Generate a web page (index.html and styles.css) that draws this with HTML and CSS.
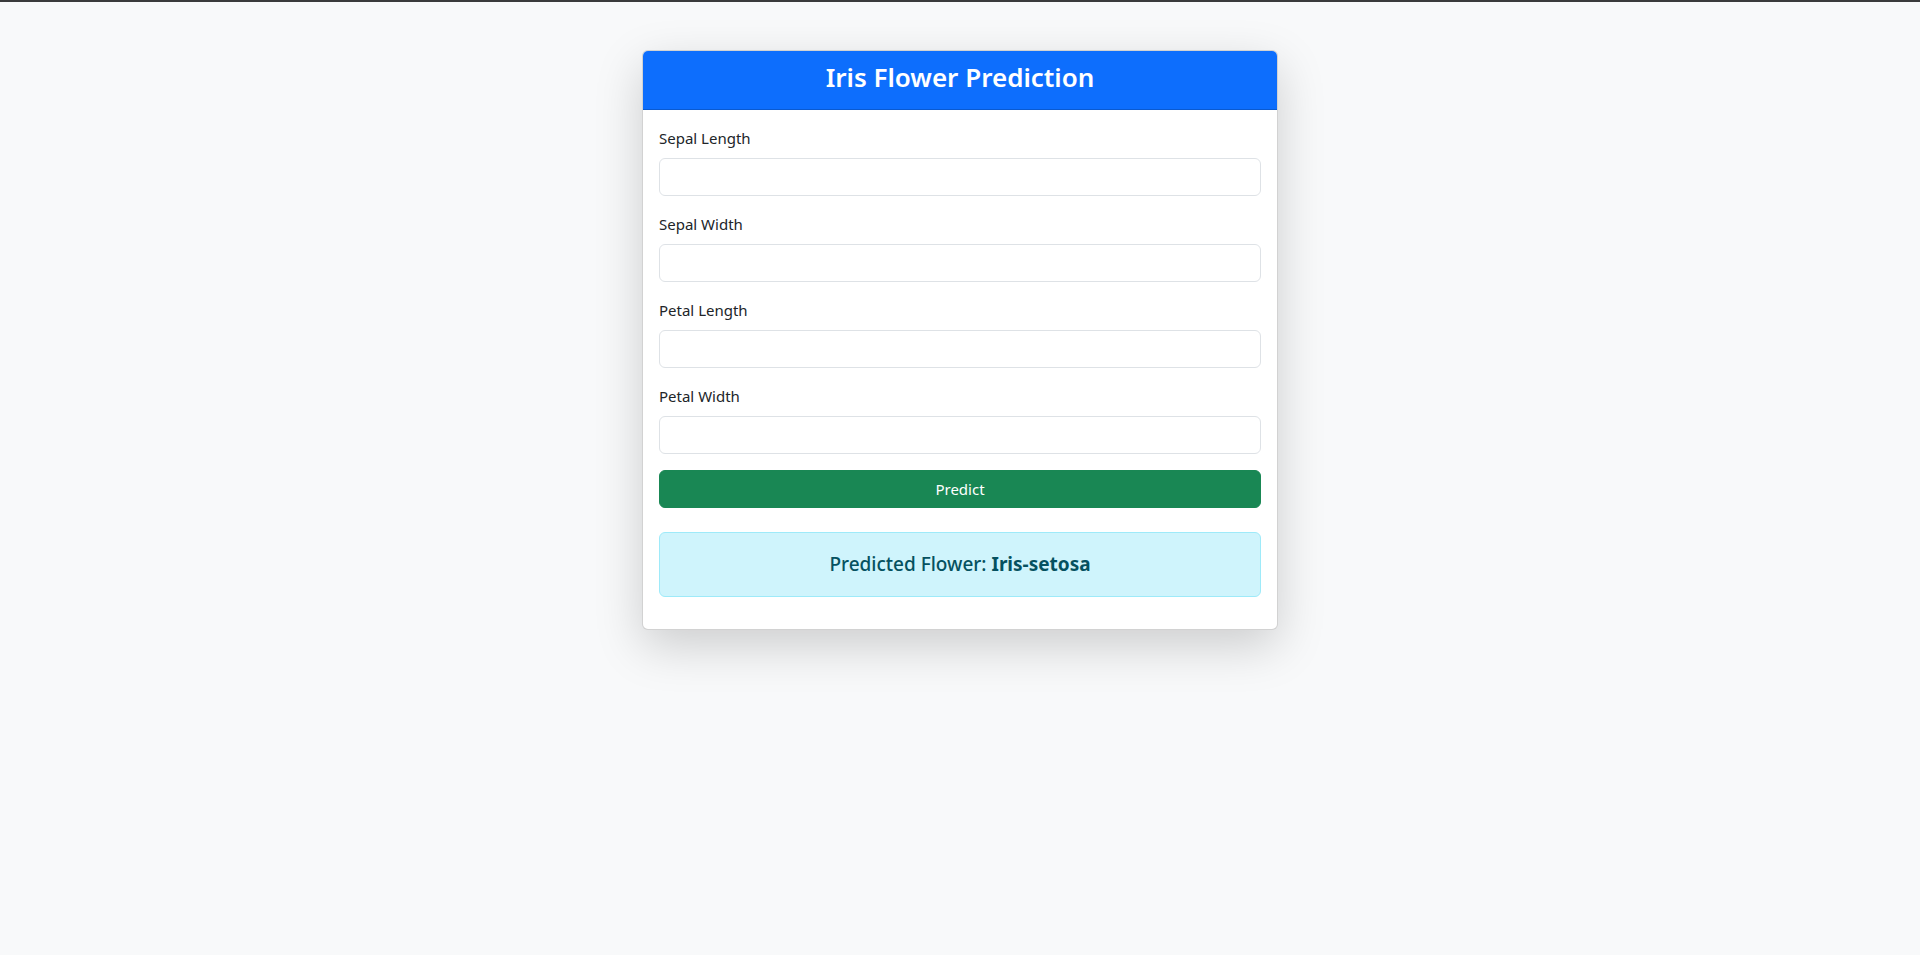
FILE: index.html
```html
<!DOCTYPE html>
<html lang="en">
<head>
<meta charset="utf-8">
<title>Iris Flower Prediction</title>
<link rel="stylesheet" href="styles.css">
</head>
<body>
<div class="topbar"></div>
<main class="page">
  <div class="card">
    <div class="card-header">
      <h2 class="title">Iris Flower Prediction</h2>
    </div>
    <div class="card-body">
      <form class="form">
        <div class="group">
          <label class="label" for="sl">Sepal Length</label>
          <input class="input" id="sl" type="text">
        </div>
        <div class="group">
          <label class="label" for="sw">Sepal Width</label>
          <input class="input" id="sw" type="text">
        </div>
        <div class="group">
          <label class="label" for="pl">Petal Length</label>
          <input class="input" id="pl" type="text">
        </div>
        <div class="group">
          <label class="label" for="pw">Petal Width</label>
          <input class="input" id="pw" type="text">
        </div>
        <button class="btn" type="button">Predict</button>
      </form>
      <div class="alert">
        <h4 class="result">Predicted Flower: <strong>Iris-setosa</strong></h4>
      </div>
    </div>
  </div>
</main>
</body>
</html>
```

FILE: styles.css
```css
* { box-sizing: border-box; }
html, body { margin: 0; padding: 0; }
body {
  background: #f8f9fa;
  font-family: "Noto Sans", "Open Sans", sans-serif;
  font-size: 16px;
  line-height: 1.5;
  color: #212529;
  min-height: 955px;
}
.topbar {
  height: 2px;
  background: #3a3b3c;
}
.page {
  display: flex;
  justify-content: center;
  padding-top: 48px;
}
.card {
  width: 636px;
  background: #fff;
  border: 1px solid rgba(0,0,0,0.175);
  border-radius: 6px;
  box-shadow: 0 16px 48px rgba(0,0,0,0.175);
  overflow: hidden;
}
.card-header {
  background: #0d6efd;
  color: #fff;
  height: 59px;
  padding-bottom: 4px;
  border-bottom: 1px solid rgba(0,0,0,0.175);
  display: flex;
  align-items: center;
  justify-content: center;
}
.title {
  margin: 0;
  font-size: 26px;
  font-weight: 600;
  line-height: 1.2;
}
.card-body {
  padding: 16px;
}
.form {
  display: flex;
  flex-direction: column;
  gap: 16px;
}
.group {
  display: flex;
  flex-direction: column;
  gap: 8px;
}
.label {
  font-size: 15px;
  line-height: 24px;
  height: 24px;
}
.input {
  height: 38px;
  border: 1px solid #dee2e6;
  border-radius: 6px;
  background: #fff;
  font: inherit;
  padding: 6px 12px;
}
.btn {
  height: 38px;
  border: 1px solid #198754;
  border-radius: 6px;
  background: #198754;
  color: #fff;
  font-family: inherit;
  font-size: 15px;
  line-height: 24px;
  padding: 6px 12px;
}
.alert {
  margin-top: 24px;
  margin-bottom: 16px;
  height: 65px;
  background: #cff4fc;
  border: 1px solid #9eeaf9;
  border-radius: 6px;
  color: #055160;
  display: flex;
  align-items: center;
  justify-content: center;
}
.result {
  margin: 0;
  font-size: 19px;
  font-weight: 500;
  line-height: 1.2;
}
.result strong { font-weight: 700; }
```
